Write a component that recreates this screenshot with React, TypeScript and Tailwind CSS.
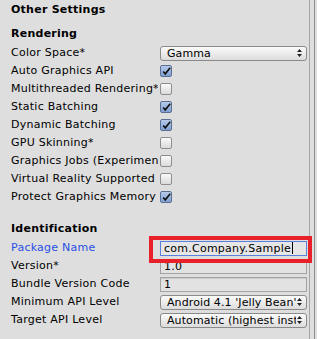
import React from "react";

const font = { fontFamily: '"DejaVu Sans", Verdana, sans-serif', letterSpacing: "0.25px" };

function Check({ on }: { on?: boolean }) {
  return (
    <div
      className={`w-[12px] h-[12px] rounded-[2px] border flex items-center justify-center ${
        on
          ? "border-[#5a6f91] bg-gradient-to-b from-[#b6cbeb] to-[#7f9fd1]"
          : "border-[#8e8e8e] bg-gradient-to-b from-[#fafafa] to-[#dadada]"
      }`}
    >
      {on && (
        <svg width="11" height="10" viewBox="0 0 11 10" className="-mt-[1px] ml-[1px]">
          <path d="M1.5 5.5 L4 8.5 L10 1" fill="none" stroke="#111" strokeWidth="2" />
        </svg>
      )}
    </div>
  );
}

function Select({ value }: { value: string }) {
  return (
    <div className="w-[147px] h-[15px] rounded-[3px] border border-[#8a8a8a] bg-gradient-to-b from-[#fbfbfb] to-[#dcdcdc] flex items-center pl-[6px] pr-[4px] overflow-hidden">
      <span className="flex-1 whitespace-nowrap overflow-hidden text-[11px] leading-none text-black tracking-[0.1px]">{value}</span>
      <svg width="5" height="8" viewBox="0 0 5 8" className="shrink-0 ml-[1px]">
        <path d="M0 3 L2.5 0 L5 3 Z M0 5 L2.5 8 L5 5 Z" fill="#222" />
      </svg>
    </div>
  );
}

function Field({ value, focus }: { value: string; focus?: boolean }) {
  return (
    <div
      className={`w-[147px] h-[15px] border flex items-center pl-[3px] leading-none text-black text-[11px] ${
        focus ? "border-[#5b7fdc] bg-[#e6e6e6] text-[11.5px]" : "border-[#a3a3a3] bg-[#e2e2e2] shadow-[inset_0_1px_0_#c8c8c8]"
      }`}
    >
      <span className="whitespace-nowrap">{value}</span>
      {focus && <span className="w-[1px] h-[12px] bg-black ml-[1px]" />}
    </div>
  );
}

function Row({ label, children, blue }: { label: string; children: React.ReactNode; blue?: boolean }) {
  return (
    <div className="h-[18px] flex items-center">
      <div className={`w-[158px] pl-[11px] whitespace-nowrap overflow-hidden text-[11px] ${blue ? "text-[#2a4fe6]" : "text-black"}`}>
        {label}
      </div>
      <div className="w-[2px]" />
      {children}
    </div>
  );
}

export default function App() {
  return (
    <div className="w-[317px] h-[339px] bg-[#dedede] flex overflow-hidden" style={font}>
      <div className="w-[309px] flex flex-col pt-[1px]">
        <div className="h-[19px] pl-[11px] flex items-center text-[11px] font-bold text-black">Other Settings</div>
        <div className="h-[24px] pl-[11px] flex items-end pb-[2px] text-[11px] font-bold text-black">Rendering</div>
        <Row label="Color Space*"><Select value="Gamma" /></Row>
        <Row label="Auto Graphics API"><Check on /></Row>
        <Row label="Multithreaded Rendering*"><Check /></Row>
        <Row label="Static Batching"><Check on /></Row>
        <Row label="Dynamic Batching"><Check on /></Row>
        <Row label="GPU Skinning*"><Check /></Row>
        <Row label="Graphics Jobs (Experimental)"><Check /></Row>
        <Row label="Virtual Reality Supported"><Check /></Row>
        <Row label="Protect Graphics Memory"><Check on /></Row>
        <div className="h-[33px] pl-[11px] flex items-end pb-[2px] text-[11px] font-bold text-black">Identification</div>
        <div className="relative">
          <div className="absolute left-[149px] top-[-3px] w-[163px] h-[27px] border-[4px] border-[#e8202a]" />
          <Row label="Package Name" blue><Field value="com.Company.Sample" focus /></Row>
        </div>
        <Row label="Version*"><Field value="1.0" /></Row>
        <Row label="Bundle Version Code"><Field value="1" /></Row>
        <Row label="Minimum API Level"><Select value="Android 4.1 'Jelly Bean' (API level 16)" /></Row>
        <Row label="Target API Level"><Select value="Automatic (highest installed)" /></Row>
      </div>
      <div className="w-[1px] bg-[#a5a5a5]" />
      <div className="w-[4px]" />
      <div className="w-[1px] bg-[#8f8f8f]" />
    </div>
  );
}
